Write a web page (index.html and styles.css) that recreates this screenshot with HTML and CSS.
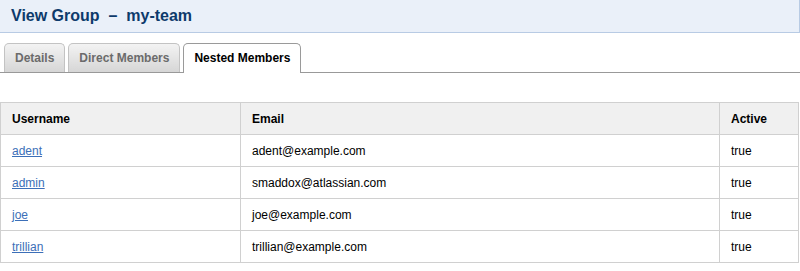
FILE: index.html
```html
<!DOCTYPE html>
<html lang="en">
<head>
  <meta charset="UTF-8">
  <title>View Group - my-team</title>
  <link rel="stylesheet" href="styles.css">
</head>
<body>
  <div class="title-bar">
    <h1>View Group &nbsp;&ndash;&nbsp; my-team</h1>
  </div>

  <ul class="tabs">
    <li class="tab">Details</li>
    <li class="tab">Direct Members</li>
    <li class="tab active">Nested Members</li>
  </ul>

  <table class="members">
    <thead>
      <tr>
        <th class="col-user">Username</th>
        <th class="col-email">Email</th>
        <th class="col-active">Active</th>
      </tr>
    </thead>
    <tbody>
      <tr>
        <td><a href="#">adent</a></td>
        <td>adent@example.com</td>
        <td>true</td>
      </tr>
      <tr>
        <td><a href="#">admin</a></td>
        <td>smaddox@atlassian.com</td>
        <td>true</td>
      </tr>
      <tr>
        <td><a href="#">joe</a></td>
        <td>joe@example.com</td>
        <td>true</td>
      </tr>
      <tr>
        <td><a href="#">trillian</a></td>
        <td>trillian@example.com</td>
        <td>true</td>
      </tr>
    </tbody>
  </table>
</body>
</html>
```

FILE: styles.css
```css
body {
  font-family: Arial, "Liberation Sans", Helvetica, sans-serif;
  font-size: 12px;
  color: #000;
  background: #fff;
  margin: 0;
}
.title-bar {
  height: 32px;
  background: #eaf0f9;
  border-bottom: 1px solid #b8cbe4;
  border-right: 1px solid #b8cbe4;
  box-sizing: content-box;
}
h1 {
  margin: 0;
  padding: 0 0 0 11px;
  line-height: 32px;
  font-size: 16px;
  font-weight: bold;
  color: #0d3a6b;
}
.tabs {
  list-style: none;
  margin: 10px 0 0 0;
  padding: 0 0 0 4px;
  display: flex;
  gap: 3px;
  border-bottom: 1px solid #999;
  height: 29px;
}
.tab {
  height: 28px;
  line-height: 28px;
  padding: 0 10px;
  border: 1px solid #c3c3c3;
  border-bottom: none;
  border-radius: 5px 5px 0 0;
  background: linear-gradient(#f3f3f3, #d6d6d6);
  color: #6b6b6b;
  font-weight: bold;
}
.tab.active {
  height: 29px;
  background: #fff;
  border-color: #9a9a9a;
  color: #000;
}
.members {
  margin-top: 29px;
  width: 799px;
  border-collapse: collapse;
  border: 1px solid #d0d0d0;
}
.members th,
.members td {
  height: 31px;
  padding: 0 11px;
  border: 1px solid #d0d0d0;
  text-align: left;
  vertical-align: middle;
}
.members th {
  background: #f0f0f0;
  font-weight: bold;
}
.col-user { width: 217px; }
.col-active { width: 56px; }
.members a {
  color: #3c6fb8;
  text-decoration: underline;
}
```
